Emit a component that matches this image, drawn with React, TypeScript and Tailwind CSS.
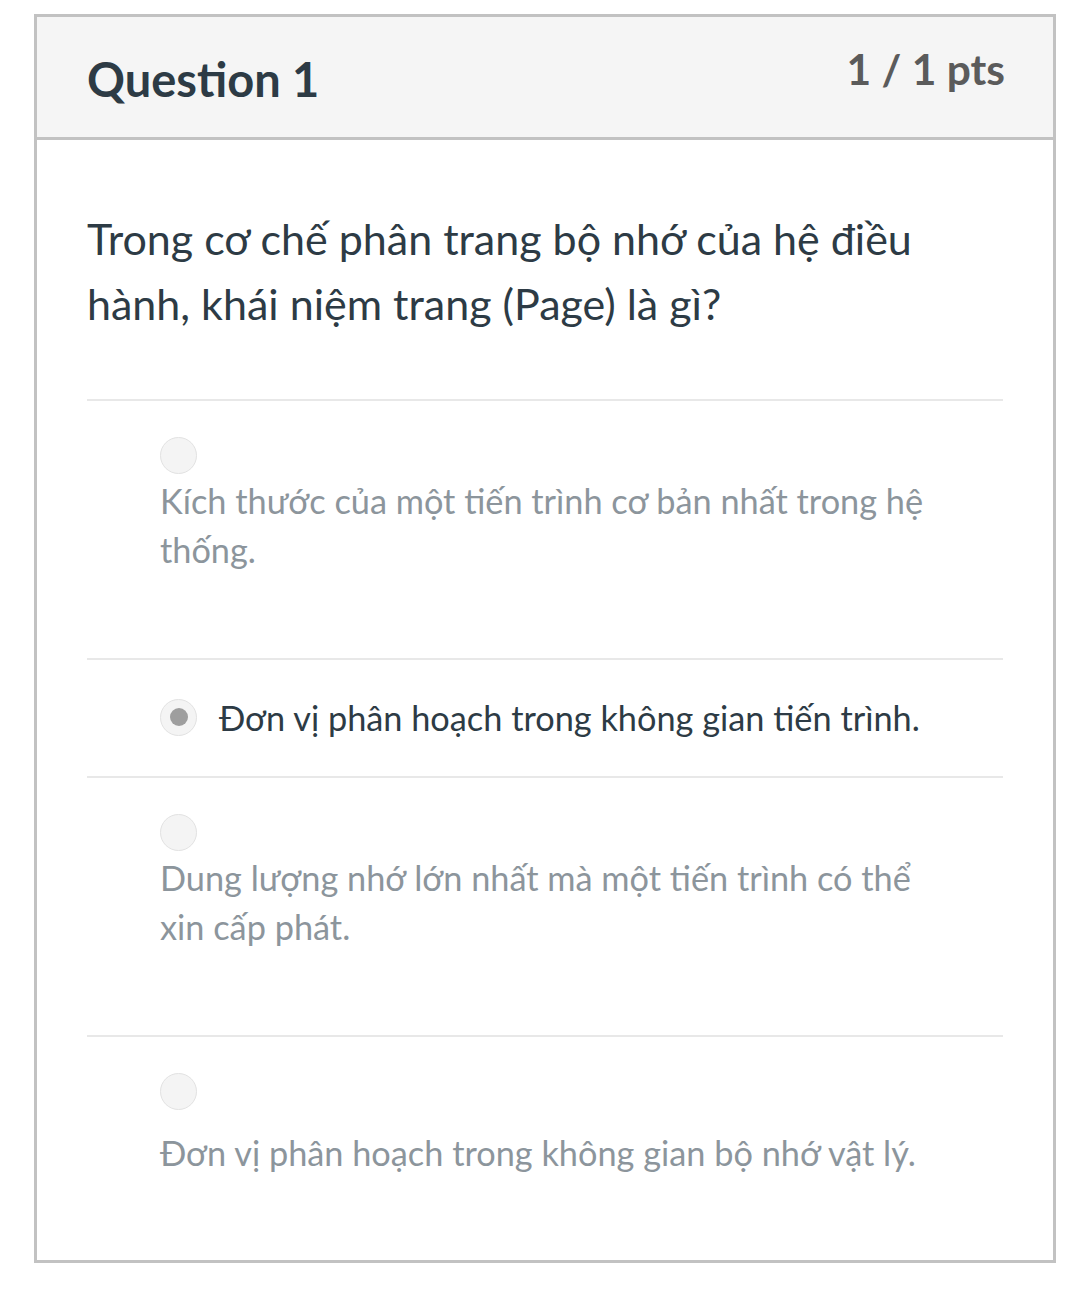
export default function App() {
  const font = { fontFamily: 'Lato, "Noto Sans", sans-serif' };
  return (
    <div className="min-h-[1305px] bg-white pt-[14px] pl-[34px] pr-[24px]" style={font}>
      <div className="border-[3px] border-[#c2c2c2]">
        {/* Header */}
        <div className="flex items-start justify-between bg-[#f5f5f5] border-b-[3px] border-[#c2c2c2] h-[123px] pl-[50px] pr-[48px]">
          <h2 className="mt-[33px] text-[47px] leading-[58px] font-bold text-[#2d3b45]">Question 1</h2>
          <div className="mt-[26px] text-[42.5px] leading-[52px] font-bold text-[#5b5b5b]">1 / 1 pts</div>
        </div>

        {/* Body */}
        <div className="px-[50px]">
          <p className="pt-[66px] pb-[63px] text-[43px] leading-[65px] text-[#2d3b45]">
            Trong cơ chế phân trang bộ nhớ của hệ điều hành, khái niệm trang (Page) là gì?
          </p>

          <div className="border-t-2 border-[#e8e8e8] pl-[73px] pr-[60px] pt-[36px] pb-[84px]">
            <Radio />
            <div className="mt-[2px] text-[34.3px] leading-[49px] text-[#8c959c]">
              Kích thước của một tiến trình cơ bản nhất trong hệ thống.
            </div>
          </div>

          <div className="border-t-2 border-[#e8e8e8] pl-[73px] pr-[60px] h-[118px] flex items-center gap-[22px] pb-[2px]">
            <Radio selected />
            <div className="text-[34.3px] leading-[49px] text-[#2d3b45]">
              Đơn vị phân hoạch trong không gian tiến trình.
            </div>
          </div>

          <div className="border-t-2 border-[#e8e8e8] pl-[73px] pr-[60px] pt-[36px] pb-[84px]">
            <Radio />
            <div className="mt-[2px] text-[34.3px] leading-[49px] text-[#8c959c]">
              Dung lượng nhớ lớn nhất mà một tiến trình có thể xin cấp phát.
            </div>
          </div>

          <div className="border-t-2 border-[#e8e8e8] pl-[73px] pr-[60px] pt-[36px] pb-[83px]">
            <Radio />
            <div className="mt-[18px] text-[34.3px] leading-[49px] text-[#8c959c]">
              Đơn vị phân hoạch trong không gian bộ nhớ vật lý.
            </div>
          </div>
        </div>
      </div>
    </div>
  );
}

function Radio({ selected = false }: { selected?: boolean }) {
  return (
    <div className="w-[37px] h-[37px] shrink-0 rounded-full bg-[#f4f4f4] border border-[#e2e2e2] flex items-center justify-center">
      {selected && <div className="w-[18px] h-[18px] rounded-full bg-[#9e9e9e]" />}
    </div>
  );
}
